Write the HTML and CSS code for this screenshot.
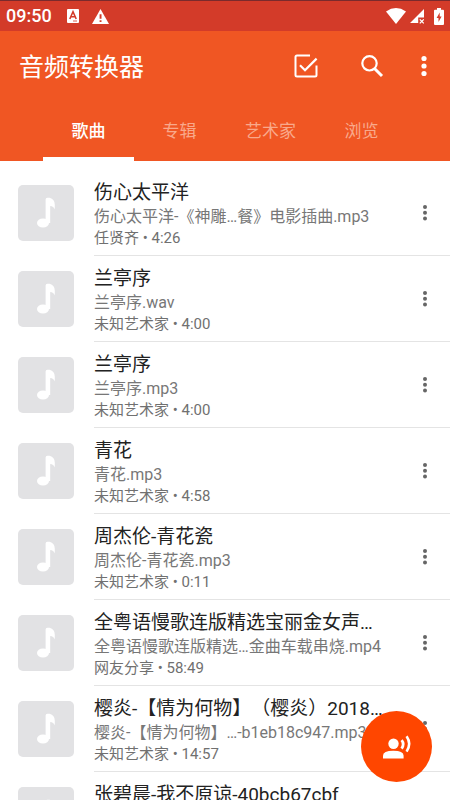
FILE: index.html
```html
<!DOCTYPE html>
<html lang="zh-CN">
<head>
<meta charset="utf-8">
<meta name="viewport" content="width=device-width, initial-scale=1">
<title>音频转换器</title>
<link rel="stylesheet" href="styles.css">
</head>
<body>
<svg class="symbols" aria-hidden="true">
  <symbol id="note" viewBox="0 0 56 56"><ellipse cx="25" cy="38" rx="6" ry="4.600"/><path d="M27.600 38V14.500q0-1.800 1.800-1.800h2.200q5.200 1.300 5.200 7v4.800q-1.300-3.200-4.600-3.400V38z"/></symbol>
  <symbol id="dots" viewBox="0 0 6 20"><circle cx="3" cy="4" r="2"/><circle cx="3" cy="9.700" r="2"/><circle cx="3" cy="15.400" r="2"/></symbol>
</svg>
<div class="app">
  <div class="status">
    <span class="clock">09:50</span>
    <svg class="note-icon" viewBox="0 0 12 14"><path fill="#fff" d="M1 0h10q1 0 1 1v12q0 1-1 1H1q-1 0-1-1V1q0-1 1-1z"/><path fill="none" stroke="#d33b29" stroke-width="1.600" d="M2.800 10 6 2.800 9.200 10M4 7.700h4"/><path stroke="#d33b29" d="M6 12h4" stroke-width=".8"/></svg>
    <svg class="warn-icon" viewBox="0 0 17 15"><path fill="#fff" d="M8.500 0 17 15H0z"/><path fill="#d33b29" d="M7.600 5.200h1.900v4.600H7.600zM7.600 11.200h1.900v1.900H7.600z"/></svg>
    <span class="status-right">
      <svg class="wifi" viewBox="0 0 20 16"><path fill="#fff" d="M0 3.400Q10-3.400 20 3.400L10 16z"/></svg>
      <svg class="signal" viewBox="0 0 14 15"><path fill="#fff" d="M14 0v8.500H8.200V14H0z"/><path stroke="#fff" stroke-width="1.300" d="m9.800 10.400 4 4m0-4-4 4"/></svg>
      <svg class="battery" viewBox="0 0 10 17"><path fill="#fff" d="M3 0h4v1.800h2q1 0 1 1V16q0 1-1 1H1q-1 0-1-1V2.800q0-1 1-1h2z"/><path fill="#d33b29" d="M5.700 4.500 2.600 10h1.900v4l3.100-5.600H5.700z"/></svg>
    </span>
  </div>
  <header class="header">
    <div class="toolbar">
      <h1>音频转换器</h1>
      <div class="tools">
        <button class="tool" aria-label="选择"><svg width="24" height="24" viewBox="0 0 24 24" fill="none" stroke="#fff" stroke-width="2"><path d="M16 1.500H3Q1.500 1.500 1.500 3v18Q1.500 22.500 3 22.500h18q1.500 0 1.500-1.500V11.500"/><path stroke-width="2.200" d="m6 11.200 5 5L22.600 4.600"/></svg></button>
        <button class="tool" aria-label="搜索"><svg width="24" height="24" viewBox="0 0 24 24" fill="none" stroke="#fff"><circle cx="9.500" cy="9.300" r="7.200" stroke-width="2.200"/><path stroke-width="3" d="m14.500 14.500 7.500 7.500"/></svg></button>
        <button class="more-tool" aria-label="更多"><svg width="6" height="22" viewBox="0 0 6 22" fill="#fff"><circle cx="3" cy="3.500" r="2.600"/><circle cx="3" cy="11" r="2.600"/><circle cx="3" cy="18.500" r="2.600"/></svg></button>
      </div>
    </div>
    <nav class="tabs">
      <a class="active" href="#songs">歌曲</a><a href="#albums">专辑</a><a href="#artists">艺术家</a><a href="#browse">浏览</a>
    </nav>
  </header>
  <ul class="list" id="songs">
    <li class="row"><svg class="thumb"><use href="#note"/></svg><div class="body"><div class="text"><h2>伤心太平洋</h2><p class="file">伤心太平洋-《神雕…餐》电影插曲.mp3</p><p class="meta">任贤齐 • 4:26</p></div><button class="more" aria-label="更多"><svg><use href="#dots"/></svg></button></div></li>
    <li class="row"><svg class="thumb"><use href="#note"/></svg><div class="body"><div class="text"><h2>兰亭序</h2><p class="file">兰亭序.wav</p><p class="meta">未知艺术家 • 4:00</p></div><button class="more" aria-label="更多"><svg><use href="#dots"/></svg></button></div></li>
    <li class="row"><svg class="thumb"><use href="#note"/></svg><div class="body"><div class="text"><h2>兰亭序</h2><p class="file">兰亭序.mp3</p><p class="meta">未知艺术家 • 4:00</p></div><button class="more" aria-label="更多"><svg><use href="#dots"/></svg></button></div></li>
    <li class="row"><svg class="thumb"><use href="#note"/></svg><div class="body"><div class="text"><h2>青花</h2><p class="file">青花.mp3</p><p class="meta">未知艺术家 • 4:58</p></div><button class="more" aria-label="更多"><svg><use href="#dots"/></svg></button></div></li>
    <li class="row"><svg class="thumb"><use href="#note"/></svg><div class="body"><div class="text"><h2>周杰伦-青花瓷</h2><p class="file">周杰伦-青花瓷.mp3</p><p class="meta">未知艺术家 • 0:11</p></div><button class="more" aria-label="更多"><svg><use href="#dots"/></svg></button></div></li>
    <li class="row"><svg class="thumb"><use href="#note"/></svg><div class="body"><div class="text"><h2>全粤语慢歌连版精选宝丽金女声…</h2><p class="file">全粤语慢歌连版精选…金曲车载串烧.mp4</p><p class="meta">网友分享 • 58:49</p></div><button class="more" aria-label="更多"><svg><use href="#dots"/></svg></button></div></li>
    <li class="row"><svg class="thumb"><use href="#note"/></svg><div class="body"><div class="text"><h2>樱炎-【情为何物】（樱炎）2018…</h2><p class="file">樱炎-【情为何物】…-b1eb18c947.mp3</p><p class="meta">未知艺术家 • 14:57</p></div><button class="more" aria-label="更多"><svg><use href="#dots"/></svg></button></div></li>
    <li class="row"><svg class="thumb"><use href="#note"/></svg><div class="body"><div class="text"><h2>张碧晨-我不原谅-40bcb67cbf</h2></div><button class="more" aria-label="更多"><svg><use href="#dots"/></svg></button></div></li>
  </ul>
  <button class="fab" aria-label="语音"><svg width="28" height="24" viewBox="0 0 28 24"><g fill="#fff"><circle cx="10.500" cy="8.800" r="5.200"/><path d="M0 23.500v-2.800q0-5 10.300-5t10.300 5v2.800z"/></g><path d="M18.600 5.200q3.200 4 0 8.400" fill="none" stroke="#fff" stroke-width="2.800"/><path d="M23.600 1.200q5.200 7.600 0 15.400" fill="none" stroke="#fff" stroke-width="2.600"/></svg></button>
</div>
</body>
</html>
```
FILE: styles.css
```css
* { box-sizing: border-box; }
body {
  margin: 0;
  font-family: Roboto, "Noto Sans CJK SC", sans-serif;
  background: #fff;
  text-spacing-trim: space-all;
}
h1, h2, p, ul { margin: 0; padding: 0; font-weight: 400; }
button { border: 0; padding: 0; background: none; display: grid; place-items: center; }
svg { display: block; flex: none; }
.symbols { position: absolute; width: 0; height: 0; }
.app { height: 100vh; display: flex; flex-direction: column; }

.status {
  display: flex;
  align-items: center;
  height: 31px;
  flex: none;
  padding: 0 6px;
  border-top: 1px solid #7a2a2c;
  background: #d33b29;
  color: #fff;
}
.clock { font-size: 18px; font-weight: 500; line-height: 28px; margin-right: 15px; }
.note-icon { width: 12px; height: 14px; margin-right: 13px; }
.warn-icon { width: 17px; height: 15px; }
.status-right { display: flex; align-items: center; margin-left: auto; }
.wifi { width: 20px; height: 16px; margin-right: 4px; }
.signal { width: 14px; height: 15px; margin-right: 10px; }
.battery { width: 10px; height: 17px; }

.header { flex: none; background: #f05623; color: #fff; }
.toolbar { display: flex; align-items: center; height: 72px; padding: 0 16px 0 19px; }
h1 { flex: 1; font-size: 25px; line-height: 36px; padding-top: 2px; }
.tools { display: flex; align-items: center; height: 70px; align-self: flex-start; }
.tool { width: 24px; height: 24px; margin-right: 42px; }
.tool + .tool { margin-right: 30px; }
.more-tool { width: 20px; height: 24px; }
.tabs { display: flex; height: 58px; padding: 0 43px; }
.tabs a {
  flex: 1;
  text-align: center;
  font-size: 17px;
  line-height: 56px;
  height: 58px;
  border-bottom: 4px solid transparent;
  color: #f9a98b;
  text-decoration: none;
}
.tabs .active { color: #fff; border-color: #fff; font-weight: 500; }

.list { flex: 1; min-height: 0; overflow: hidden; list-style: none; padding-top: 9px; }
.row { display: flex; height: 86px; padding-left: 18px; gap: 20px; }
.thumb { width: 56px; height: 56px; margin-top: 15px; border-radius: 5px; background: #e2e2e4; fill: #fff; }
.body { flex: 1; min-width: 0; display: flex; border-bottom: 1px solid #e4e4e4; }
.text { flex: 1; min-width: 0; padding-top: 11px; white-space: nowrap; }
h2 { font-size: 19px; line-height: 24px; color: #222; }
.file { font-size: 16px; line-height: 23px; color: #777; }
.meta { font-size: 15px; line-height: 21px; color: #707070; }
.more { width: 50px; height: 86px; fill: #666; }
.more svg { width: 6px; height: 20px; }

.fab {
  position: fixed;
  right: 18px;
  bottom: 18px;
  width: 71px;
  height: 71px;
  border-radius: 50%;
  background: #ff4600;
}
```
